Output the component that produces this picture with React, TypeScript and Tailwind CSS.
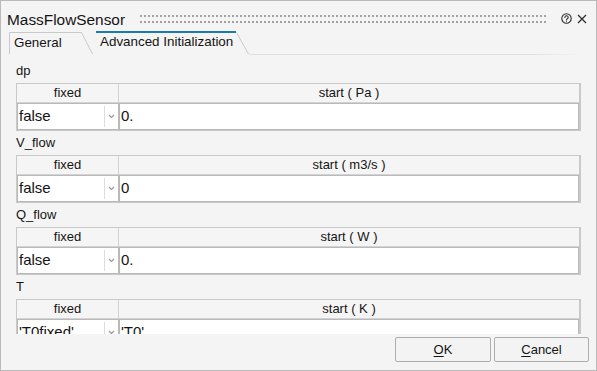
const sections = [
  { name: "dp", fixed: "false", unit: "Pa", start: "0." },
  { name: "V_flow", fixed: "false", unit: "m3/s", start: "0" },
  { name: "Q_flow", fixed: "false", unit: "W", start: "0." },
  { name: "T", fixed: "'T0fixed'", unit: "K", start: "'T0'" },
];

function Grip() {
  return (
    <svg className="h-[8px] w-full" preserveAspectRatio="none">
      <defs>
        <pattern id="grip" width="4" height="6" patternUnits="userSpaceOnUse">
          <rect width="2" height="2" fill="#a3a3a3" />
        </pattern>
      </defs>
      <rect width="100%" height="8" fill="url(#grip)" />
    </svg>
  );
}

function HelpIcon() {
  return (
    <svg width="11" height="11" viewBox="0 0 11 11" fill="none" stroke="#2b2b2b" strokeWidth="1.1">
      <circle cx="5.5" cy="5.5" r="4.7" />
      <path d="M3.9 4.4a1.65 1.65 0 1 1 2.4 1.45c-.55.3-.8.6-.8 1.2" strokeLinecap="round" />
      <circle cx="5.5" cy="8.2" r=".5" fill="#2b2b2b" stroke="none" />
    </svg>
  );
}

function CloseIcon() {
  return (
    <svg width="10" height="10" viewBox="0 0 10 10" stroke="#2b2b2b" strokeWidth="1.2">
      <path d="M1 1l8 8M9 1L1 9" />
    </svg>
  );
}

function ParamTable({ fixed, unit, start }: { fixed: string; unit: string; start: string }) {
  return (
    <div className="border border-[#c9c9c9] border-r-2">
      <div className="flex h-[19px] border-b border-[#d3d3d3] bg-[#f5f5f5]">
        <div className="flex w-[102px] items-center justify-center border-r border-[#d3d3d3]">fixed</div>
        <div className="flex flex-1 items-center justify-center">start ( {unit} )</div>
      </div>
      <div className="flex h-[27px] text-[15px]">
        <div className="flex w-[102px] border-r border-[#d3d3d3]">
          <div className="flex flex-1 items-center border border-[#b9b9b9] bg-white pl-[1px]">{fixed}</div>
          <div className="-ml-[15px] my-[3px] flex w-[14px] items-center justify-center border-l border-[#dcdcdc]">
            <svg width="7" height="5" viewBox="0 0 7 5" fill="none" stroke="#9a9a9a" strokeWidth="1.2">
              <path d="M1 1l2.5 2.5L6 1" />
            </svg>
          </div>
        </div>
        <div className="flex flex-1 items-center border border-[#b9b9b9] bg-white pl-[1px]">{start}</div>
      </div>
    </div>
  );
}

export default function App() {
  return (
    <div className="flex h-[371px] w-[597px] flex-col border border-[#bababa] bg-[#f4f4f4] text-[13px] text-[#141414] font-['Liberation_Sans',Arial,sans-serif]">
      {/* title bar */}
      <div className="flex h-[30px] items-start pl-[6px] pr-[9px] pt-[10px]">
        <span className="text-[15.4px] leading-[17px]">MassFlowSensor</span>
        <div className="ml-[15px] mt-[4px] flex-1">
          <Grip />
        </div>
        <div className="ml-[13px] mt-[2px]">
          <HelpIcon />
        </div>
        <div className="ml-[5px] mt-[3px]">
          <CloseIcon />
        </div>
      </div>

      {/* tabs */}
      <div className="flex h-[24px] items-start pl-[8px] pr-[15px] text-[13.4px]">
        <div className="relative mt-[1px] h-[22px] w-[84px] pl-[5px] pt-[3px] leading-[16px]">
          <svg className="absolute inset-0" width="84" height="22" fill="none" stroke="#c8c8c8">
            <path d="M0.5 22V0.5H72.5L83.5 22" />
          </svg>
          <span className="relative">General</span>
        </div>
        <div className="relative ml-[3px] h-[23px] w-[153px] pl-[4px] pt-[3px] leading-[16px]">
          <svg className="absolute inset-0" width="153" height="23" fill="none">
            <path d="M0 1H140" stroke="#1c7cae" strokeWidth="2" />
            <path d="M140.5 1.5L152.5 23" stroke="#c8c8c8" />
          </svg>
          <span className="relative">Advanced Initialization</span>
        </div>
        <div className="h-px flex-1 self-end bg-gradient-to-r from-[#e0e0e0] from-85% to-transparent" />
      </div>

      {/* content */}
      <div className="h-[279px] overflow-hidden pl-[15px] pr-[15px] pt-[8px]">
        {sections.map((s) => (
          <div key={s.name} className="mb-[4px]">
            <div className="mb-[4px] h-[16px] leading-[16px]">{s.name}</div>
            <ParamTable fixed={s.fixed} unit={s.unit} start={s.start} />
          </div>
        ))}
      </div>

      {/* footer */}
      <div className="flex flex-1 items-start justify-end gap-[3px] pr-[7px] pt-[3px]">
        <button className="h-[25px] w-[96px] rounded-[2px] border border-[#adadad] bg-[#f3f3f3]">
          <span className="underline underline-offset-2">O</span>K
        </button>
        <button className="h-[25px] w-[95px] rounded-[2px] border border-[#adadad] bg-[#f3f3f3]">
          <span className="underline underline-offset-2">C</span>ancel
        </button>
      </div>
    </div>
  );
}
